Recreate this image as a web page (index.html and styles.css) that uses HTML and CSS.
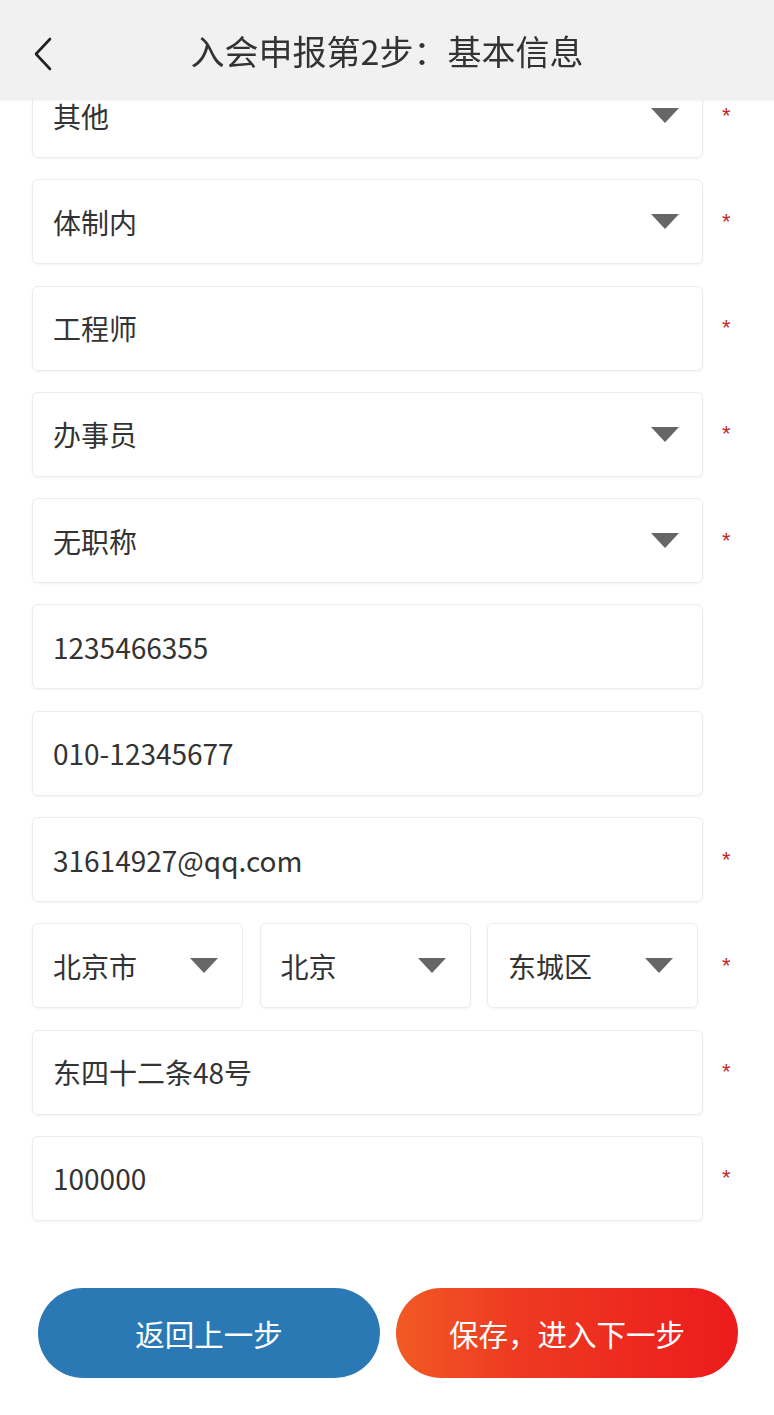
FILE: index.html
```html
<!DOCTYPE html>
<html lang="zh-CN">
<head>
<meta charset="utf-8">
<title>入会申报第2步：基本信息</title>
<link rel="stylesheet" href="styles.css">
</head>
<body>
<header class="topbar">
  <svg class="back" viewBox="0 0 24 36" width="24" height="36"><path d="M19 3 L5 18 L19 33" fill="none" stroke="#222" stroke-width="2.6" stroke-linecap="round" stroke-linejoin="round"/></svg>
  <h1 class="title">入会申报第2步：基本信息</h1>
</header>
<main class="form">
  <div class="row"><div class="field select">其他<span class="arrow"></span></div><span class="star">*</span></div>
  <div class="row"><div class="field select">体制内<span class="arrow"></span></div><span class="star">*</span></div>
  <div class="row"><div class="field">工程师</div><span class="star">*</span></div>
  <div class="row"><div class="field select">办事员<span class="arrow"></span></div><span class="star">*</span></div>
  <div class="row"><div class="field select">无职称<span class="arrow"></span></div><span class="star">*</span></div>
  <div class="row"><div class="field">1235466355</div></div>
  <div class="row"><div class="field">010-12345677</div></div>
  <div class="row"><div class="field">31614927@qq.com</div><span class="star">*</span></div>
  <div class="row">
    <div class="region">
      <div class="field select small">北京市<span class="arrow"></span></div>
      <div class="field select small">北京<span class="arrow"></span></div>
      <div class="field select small">东城区<span class="arrow"></span></div>
    </div>
    <span class="star">*</span>
  </div>
  <div class="row"><div class="field">东四十二条48号</div><span class="star">*</span></div>
  <div class="row"><div class="field">100000</div><span class="star">*</span></div>
  <div class="actions">
    <button class="btn prev">返回上一步</button>
    <button class="btn next">保存，进入下一步</button>
  </div>
</main>
</body>
</html>
```
FILE: styles.css
```css
* { box-sizing: border-box; }
html, body { margin: 0; padding: 0; background: #fff; }
body {
  font-family: "Noto Sans CJK SC", "Noto Sans", sans-serif;
  color: #333;
}
.topbar {
  position: fixed;
  top: 0; left: 0; right: 0;
  height: 100px;
  background: #f1f1f1;
  display: flex;
  align-items: center;
  justify-content: center;
  z-index: 10;
  box-shadow: 0 1px 2px rgba(0,0,0,0.04);
}
.back {
  position: absolute;
  left: 31px;
  top: 36px;
}
.title {
  margin: 0;
  font-size: 34px;
  font-weight: 400;
  color: #333;
}
.form {
  padding: 73px 0 0 32px;
}
.row {
  display: flex;
  align-items: center;
  height: 85px;
  margin-bottom: 21.3px;
}
.field {
  width: 671px;
  height: 85px;
  border: 1px solid #ececec;
  border-radius: 6px;
  box-shadow: 0 1px 3px rgba(0,0,0,0.05);
  background: #fff;
  display: flex;
  align-items: center;
  padding: 0 23px 0 20px;
  font-size: 28px;
  color: #333;
}
.select { justify-content: space-between; }
.arrow {
  width: 0; height: 0;
  border-left: 14px solid transparent;
  border-right: 14px solid transparent;
  border-top: 15px solid #666;
}
.region {
  width: 671px;
  display: flex;
  gap: 16.5px;
}
.field.small {
  width: 211px;
  padding-right: 24px;
}
.star {
  margin-left: 19px;
  color: #c4242c;
  font-size: 22px;
  line-height: 1;
  font-family: "Liberation Sans", sans-serif;
}
.actions {
  display: flex;
  gap: 16px;
  padding: 46px 0 0 6px;
}
.btn {
  width: 342px;
  height: 90px;
  border: none;
  border-radius: 45px;
  color: #fff;
  font-family: "Noto Sans CJK SC", sans-serif;
  font-size: 29.5px;
}
.prev { background: #2b79b4; }
.next { background: linear-gradient(90deg, #f15a24 0%, #ee3a22 35%, #ec1b1c 100%); }
```
